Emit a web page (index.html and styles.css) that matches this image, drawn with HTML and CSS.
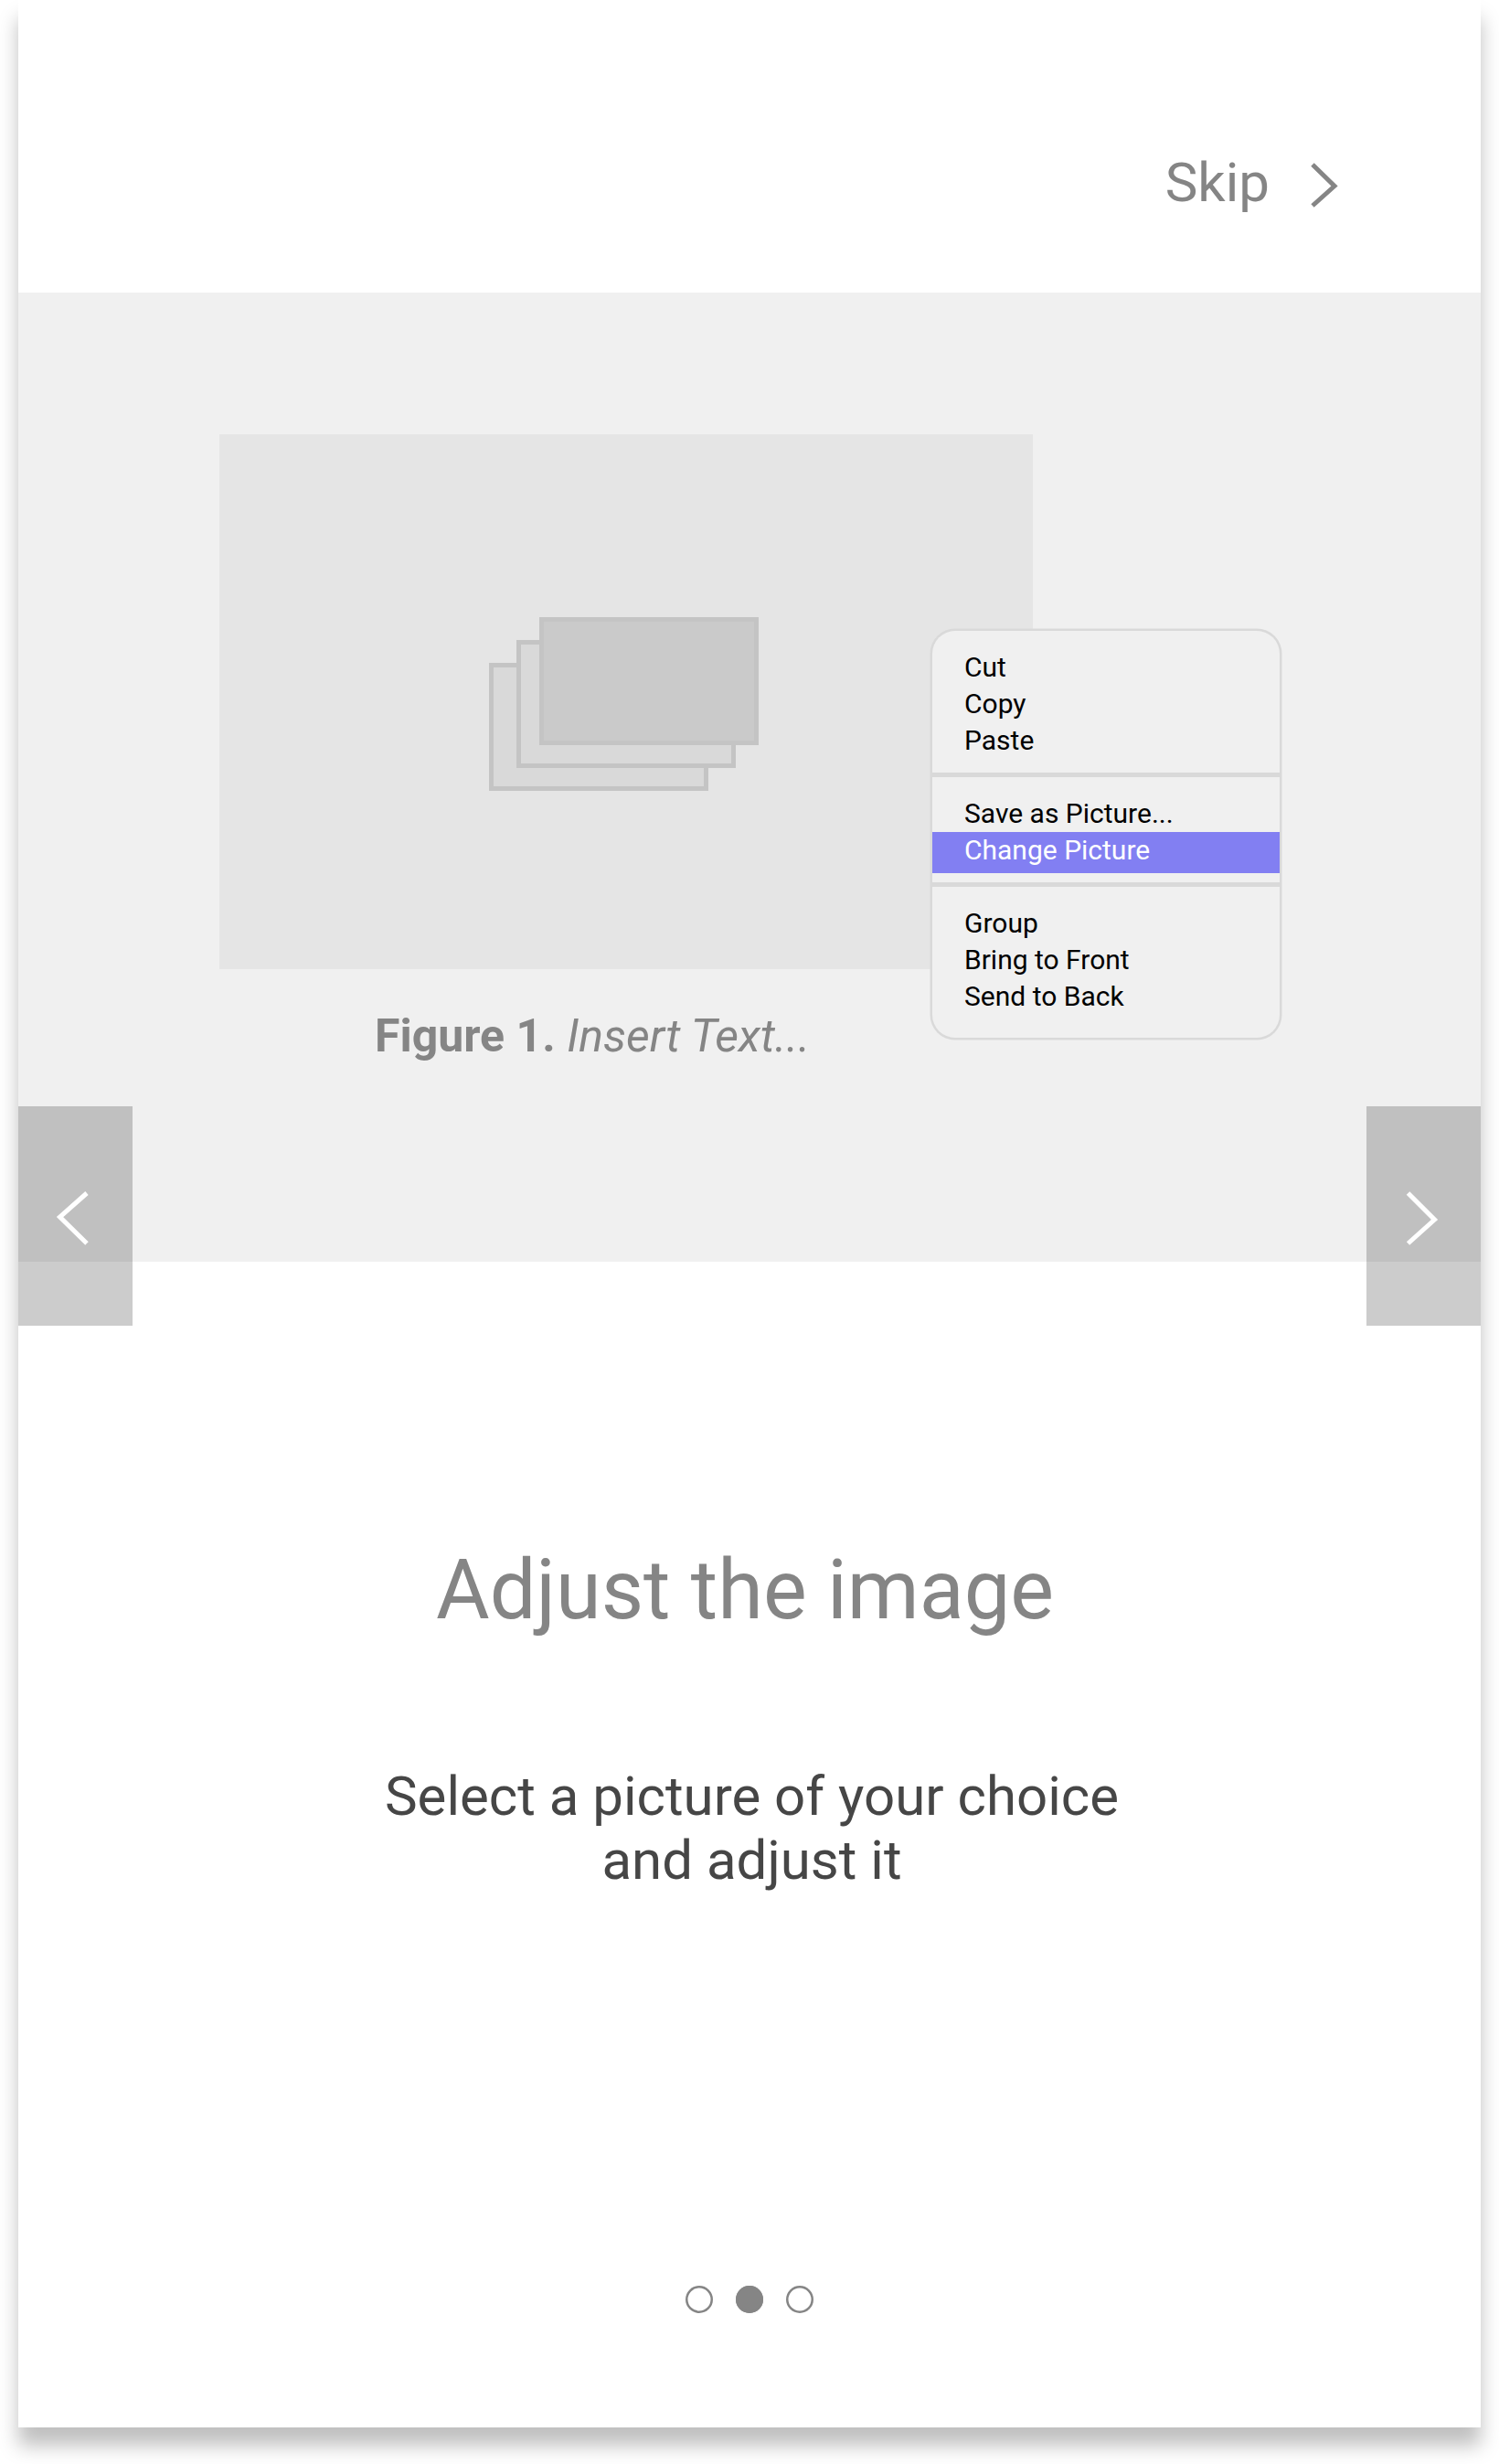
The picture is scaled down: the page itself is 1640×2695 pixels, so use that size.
FILE: index.html
```html
<!DOCTYPE html>
<html lang="en">
<head>
<meta charset="utf-8">
<title>Adjust the image</title>
<link rel="stylesheet" href="styles.css">
</head>
<body>
<main class="screen">
  <header class="topbar">
    <a class="skip">Skip
      <svg class="skip-icon" viewBox="0 0 35 55"><path d="M6 5 30 28.5 6 50"/></svg>
    </a>
  </header>
  <section class="hero">
    <figure class="figure">
      <div class="picture">
        <svg class="stack" viewBox="0 0 295 190">
          <rect class="sheet" x="2.5" y="52.5" width="235" height="135"/>
          <rect class="sheet" x="32.5" y="27.5" width="235" height="135"/>
          <rect class="sheet sheet-front" x="57.5" y="2.5" width="235" height="135"/>
        </svg>
      </div>
      <figcaption class="caption"><b>Figure 1.</b> <i>Insert Text...</i></figcaption>
    </figure>
    <div class="menu">
      <ul class="group">
        <li>Cut</li>
        <li>Copy</li>
        <li>Paste</li>
      </ul>
      <ul class="group group-save">
        <li>Save as Picture...</li>
        <li class="active">Change Picture</li>
      </ul>
      <ul class="group">
        <li>Group</li>
        <li>Bring to Front</li>
        <li>Send to Back</li>
      </ul>
    </div>
    <button class="nav nav-prev" aria-label="Previous"><svg viewBox="0 0 125 240"><path d="M75 95 45.5 121 75 150"/></svg></button>
    <button class="nav nav-next" aria-label="Next"><svg viewBox="0 0 125 240"><path d="M45.5 95 74.5 124 45.5 150"/></svg></button>
  </section>
  <section class="copy">
    <h1 class="title">Adjust the image</h1>
    <p class="text">Select a picture of your choice<br>and adjust it</p>
  </section>
  <div class="dots">
    <span class="dot"></span>
    <span class="dot dot-active"></span>
    <span class="dot"></span>
  </div>
</main>
</body>
</html>
```
FILE: styles.css
```css
* { box-sizing: border-box; }
body {
  margin: 0;
  height: 2695px;
  padding: 0 20px;
  background: #fff;
  font-family: Roboto, "Liberation Sans", sans-serif;
  color: #858585;
  overflow: hidden;
}
.screen {
  height: 2655px;
  display: flex;
  flex-direction: column;
  background: #fff;
  box-shadow: 0 20px 20px rgba(0, 0, 0, 0.25);
}
.topbar {
  height: 320px;
  padding: 165px 155px 0 0;
  display: flex;
  justify-content: flex-end;
  align-items: flex-start;
}
.skip {
  display: flex;
  gap: 41px;
  font-size: 60px;
  line-height: 70px;
}
.skip-icon {
  width: 35px;
  height: 55px;
  margin-top: 10px;
}
path {
  fill: none;
  stroke: #858585;
  stroke-width: 5;
}
.hero {
  position: relative;
  height: 1060px;
  padding: 155px 0 0 220px;
  background: #f0f0f0;
}
.figure { margin: 0; width: 890px; }
.picture {
  height: 585px;
  padding: 200px 0 0 295px;
  background: #e5e5e5;
}
.stack { display: block; width: 295px; height: 190px; }
.sheet { fill: #d9d9d9; stroke: #c4c4c4; stroke-width: 5; }
.sheet-front { fill: #cacaca; }
.caption {
  padding: 43px 0 0 170px;
  font-size: 50px;
  line-height: 60px;
}
.menu {
  position: absolute;
  left: 1000px;
  top: 370px;
  width: 380px;
  height: 445px;
  background: #f0f0f0;
  border-radius: 25px;
  box-shadow: 0 0 0 2.5px #d9d9d9;
  font-size: 30px;
  line-height: 40px;
  color: #000;
}
.group {
  list-style: none;
  margin: 0;
  padding: 20px 0 15px;
}
.group + .group {
  border-top: 5px solid #d9d9d9;
}
.group li { padding-left: 35px; }
.menu .group:first-child { height: 155px; }
.group-save { height: 120px; }
.group .active {
  height: 45px;
  background: #827ff2;
  color: #fff;
}
.nav {
  position: absolute;
  top: 890px;
  width: 125px;
  height: 240px;
  padding: 0;
  border: 0;
  background: rgba(0, 0, 0, 0.2);
}
.nav svg { display: block; width: 125px; height: 240px; }
.nav path { stroke: #fff; }
.nav-prev { left: 0; }
.nav-next { right: 0; }
.copy {
  padding-top: 307px;
  text-align: center;
}
.title {
  margin: 0 10px 0 0;
  font-size: 90px;
  font-weight: 400;
  line-height: 106px;
}
.text {
  margin: 137px 0 0 5px;
  font-size: 60px;
  line-height: 70px;
  color: #464646;
}
.dots {
  margin-top: auto;
  padding-bottom: 125px;
  display: flex;
  justify-content: center;
  gap: 25px;
}
.dot {
  width: 30px;
  height: 30px;
  border-radius: 50%;
  box-shadow: inset 0 0 0 2.5px #858585;
}
.dot-active { background: #858585; }
```
